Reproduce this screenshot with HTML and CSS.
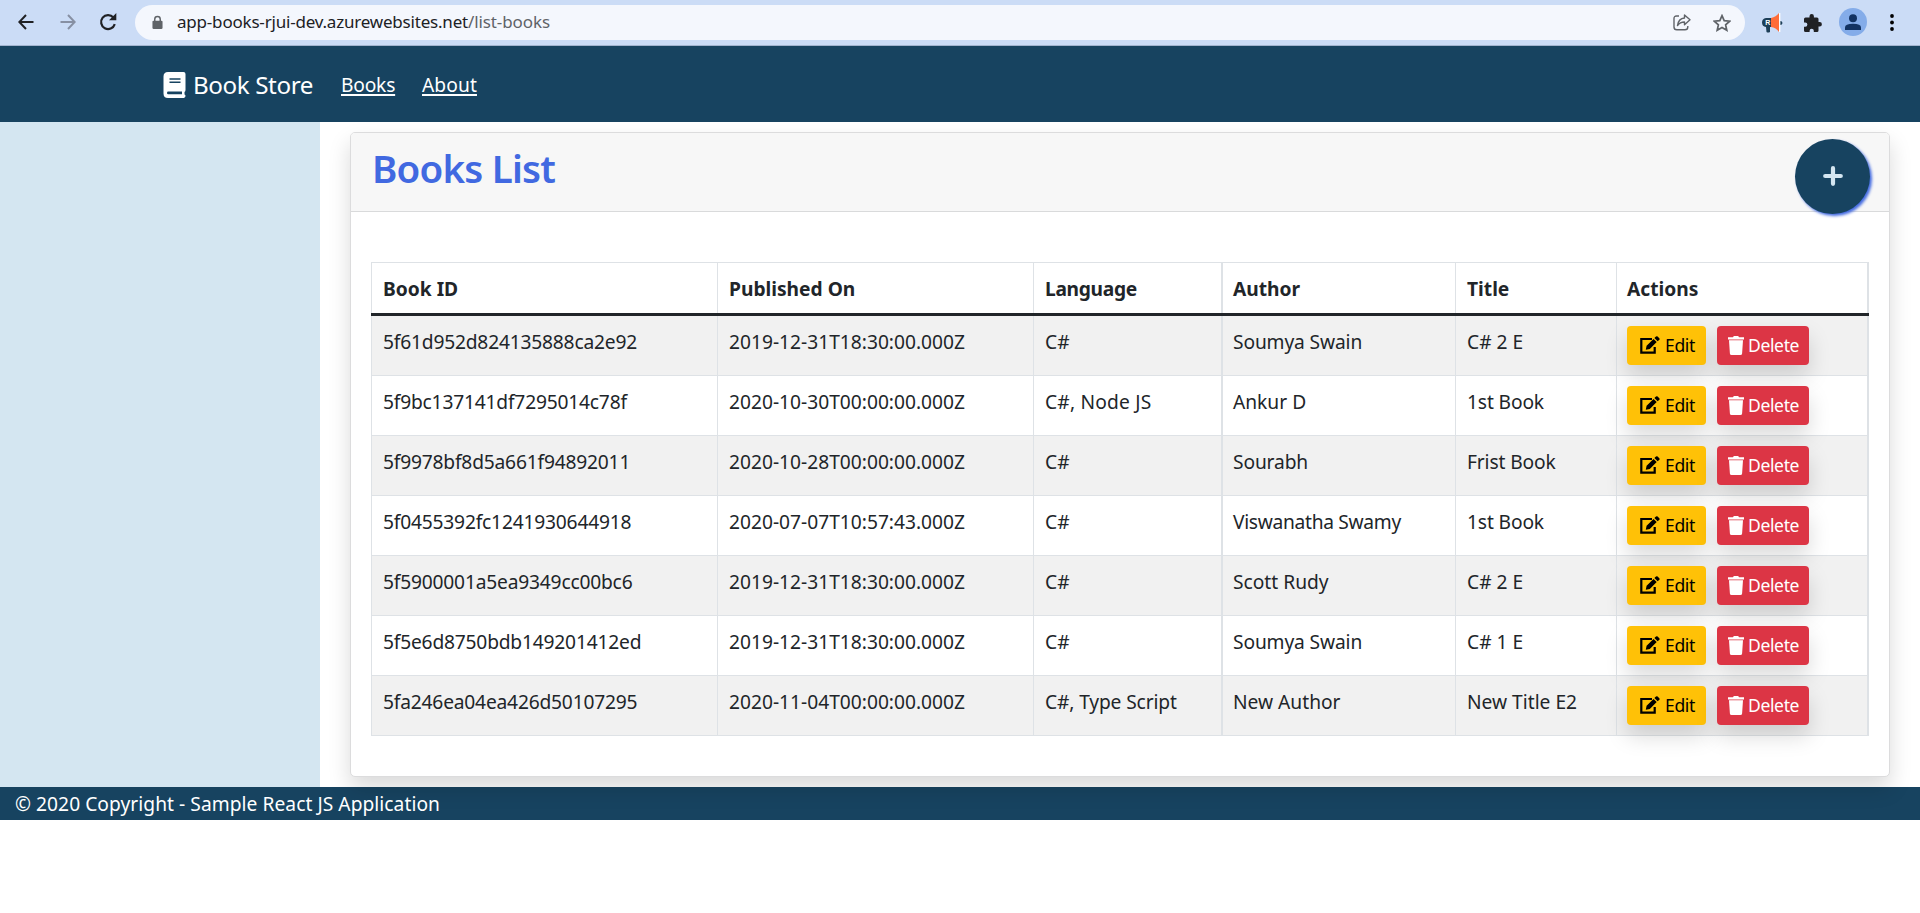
FILE: index.html
```html
<!DOCTYPE html>
<html lang="en">
<head>
<meta charset="utf-8">
<title>Book Store</title>
<link rel="stylesheet" href="styles.css">
</head>
<body>
<svg width="0" height="0" class="defs">
  <symbol id="edit" viewBox="0 0 20 18"><path d="M12 3H1.300V16.700H14.700V11" fill="none" stroke="currentColor" stroke-width="2.200"/><path d="M5.800 13.800l.8-4L13.500 3l3.200 3.100-6.900 6.900zM14.400 2.100L16 .6q.8-.7 1.600 0l1.700 1.600q.8.8 0 1.600l-1.600 1.500z" fill="currentColor"/></symbol>
  <symbol id="trash" viewBox="0 0 16 19"><path d="M0 1.200h5L5.800 0h4.400l.8 1.200h5v2.300H0zM1 4.200h14l-.9 13.200q-.1 1.600-1.700 1.600H3.600q-1.600 0-1.700-1.600z" fill="currentColor"/></symbol>
</svg>
<header class="browser">
  <svg class="back" viewBox="0 0 16 16"><path d="M15.500 8H1.500M8 1L1.300 8 8 15" fill="none" stroke="currentColor" stroke-width="2"/></svg>
  <svg class="forward" viewBox="0 0 16 16"><path d="M.5 8h14M8 1l6.700 7L8 15" fill="none" stroke="currentColor" stroke-width="2"/></svg>
  <svg class="reload" viewBox="0 0 18 18"><path d="M15.800 11.200A7 7 0 1 1 14.400 4.400" fill="none" stroke="currentColor" stroke-width="2.200"/><path d="M17.300 0v7.300H10z" fill="currentColor"/></svg>
  <div class="address">
    <svg class="lock" viewBox="0 0 12 15"><path d="M3 6V4a3 3 0 0 1 6 0v2" fill="none" stroke="currentColor" stroke-width="1.600"/><rect x=".5" y="5.500" width="11" height="9" rx="1.300" fill="currentColor"/></svg>
    <div class="url"><span class="host">app-books-rjui-dev.azurewebsites.net</span><span class="path">/list-books</span></div>
    <svg class="share" viewBox="0 0 18 17"><path d="M6 2H3.500Q1 2 1 4.500V13Q1 15.800 3.800 15.800H12Q14.800 15.800 14.800 13V12M4.500 11.500Q5.500 4.500 11.500 4V1L17 5.800 11.500 10.800V8Q7 8 4.500 11.500z" fill="none" stroke="currentColor" stroke-width="1.400" stroke-linejoin="round"/></svg>
    <svg class="star" viewBox="0 0 18 18"><path d="M9 1.700l2.200 5 5.500.5-4.100 3.600 1.200 5.400L9 13.400l-4.800 2.800 1.200-5.400L1.300 7.200l5.500-.5z" fill="none" stroke="currentColor" stroke-width="1.700"/></svg>
  </div>
  <svg class="horn" viewBox="0 0 21 20"><path d="M4 5h6v9H8v5q-2 1-3.500 0L4 14Q0 13.500 0 9.500T4 5z" fill="#1d3f58"/><text x="3.300" y="12" class="horn-letter">R</text><path d="M18 8q2.500 0 2.500 2T18 12z" fill="#1d3f58"/><path d="M9 5Q14 4 17 0V19Q14 14.500 9 14z" fill="#ff6c37"/><path d="M17.700 0v19" stroke="#fff" stroke-width="1.300"/></svg>
  <svg class="puzzle" viewBox="0 0 18 18"><path d="M1.500 3.500H5.500V2.300a2.200 2.200 0 0 1 4.400 0V3.500H13q1.500 0 1.500 1.500V8h1.200a2.200 2.200 0 0 1 0 4.400H14.500V16.500q0 1.500-1.500 1.500H9.800V16.800a2.100 2.100 0 0 0-4.200 0V18H1.500Q0 18 0 16.500V12.800H1.200a2.200 2.200 0 0 0 0-4.400H0V5Q0 3.500 1.500 3.500z" fill="#202124"/></svg>
  <svg class="avatar" viewBox="0 0 28 28"><circle cx="14" cy="14" r="14" fill="#84ace9"/><circle cx="14" cy="10.200" r="4" fill="#123262"/><path d="M6 22V19.500Q6 15.800 14 15.800T22 19.500V22z" fill="#123262"/></svg>
  <svg class="dots" viewBox="0 0 4 17"><circle cx="2" cy="2" r="1.900"/><circle cx="2" cy="8.500" r="1.900"/><circle cx="2" cy="15" r="1.900"/></svg>
</header>
<nav class="navbar">
  <svg class="book" viewBox="0 0 22 26"><path d="M4.500 0H20q2 0 2 2V18q0 1.400-1 1.900v2.600q1 .3 1 1.500T20.500 26H4.500Q0 26 0 21.500V4.500Q0 0 4.500 0z" fill="#fff"/><path d="M6 7h11M6 10.300h11" stroke="#174360" stroke-width="1.400"/><path d="M4.700 19.500H18.500v2.800H4.700Q3.500 22.300 3.500 20.900T4.700 19.500z" fill="#174360"/></svg>
  <a class="brand">Book Store</a>
  <a class="nav-link nav-books">Books</a>
  <a class="nav-link nav-about">About</a>
</nav>
<div class="layout">
  <aside class="sidebar"></aside>
  <main class="main">
    <section class="card">
      <div class="card-header">
        <h1>Books List</h1>
        <button class="add"><svg viewBox="0 0 20 20"><path d="M10 2.200v15.600M2.200 10h15.600" stroke="#d4e6f1" stroke-width="4.200" stroke-linecap="round"/></svg></button>
      </div>
      <div class="card-body">
        <table class="books">
          <colgroup><col class="c-id"><col class="c-date"><col class="c-lang"><col class="c-author"><col class="c-title"><col class="c-actions"></colgroup>
          <thead><tr><th>Book ID</th><th>Published On</th><th class="tight">Language</th><th>Author</th><th>Title</th><th>Actions</th></tr></thead>
          <tbody>
            <tr><td class="id">5f61d952d824135888ca2e92</td><td>2019-12-31T18:30:00.000Z</td><td>C#</td><td class="snug">Soumya Swain</td><td>C# 2 E</td><td><div class="actions"><button class="edit"><svg><use href="#edit"/></svg><span>Edit</span></button><button class="delete"><svg><use href="#trash"/></svg><span>Delete</span></button></div></td></tr>
            <tr><td class="id">5f9bc137141df7295014c78f</td><td>2020-10-30T00:00:00.000Z</td><td class="wide">C#, Node JS</td><td>Ankur D</td><td class="snug">1st Book</td><td><div class="actions"><button class="edit"><svg><use href="#edit"/></svg><span>Edit</span></button><button class="delete"><svg><use href="#trash"/></svg><span>Delete</span></button></div></td></tr>
            <tr><td class="id">5f9978bf8d5a661f94892011</td><td>2020-10-28T00:00:00.000Z</td><td>C#</td><td class="snug">Sourabh</td><td class="snug">Frist Book</td><td><div class="actions"><button class="edit"><svg><use href="#edit"/></svg><span>Edit</span></button><button class="delete"><svg><use href="#trash"/></svg><span>Delete</span></button></div></td></tr>
            <tr><td class="id">5f0455392fc1241930644918</td><td>2020-07-07T10:57:43.000Z</td><td>C#</td><td class="tight">Viswanatha Swamy</td><td class="snug">1st Book</td><td><div class="actions"><button class="edit"><svg><use href="#edit"/></svg><span>Edit</span></button><button class="delete"><svg><use href="#trash"/></svg><span>Delete</span></button></div></td></tr>
            <tr><td class="id">5f5900001a5ea9349cc00bc6</td><td>2019-12-31T18:30:00.000Z</td><td>C#</td><td>Scott Rudy</td><td>C# 2 E</td><td><div class="actions"><button class="edit"><svg><use href="#edit"/></svg><span>Edit</span></button><button class="delete"><svg><use href="#trash"/></svg><span>Delete</span></button></div></td></tr>
            <tr><td class="id">5f5e6d8750bdb149201412ed</td><td>2019-12-31T18:30:00.000Z</td><td>C#</td><td class="snug">Soumya Swain</td><td>C# 1 E</td><td><div class="actions"><button class="edit"><svg><use href="#edit"/></svg><span>Edit</span></button><button class="delete"><svg><use href="#trash"/></svg><span>Delete</span></button></div></td></tr>
            <tr><td class="id">5fa246ea04ea426d50107295</td><td>2020-11-04T00:00:00.000Z</td><td class="snug">C#, Type Script</td><td>New Author</td><td>New Title E2</td><td><div class="actions"><button class="edit"><svg><use href="#edit"/></svg><span>Edit</span></button><button class="delete"><svg><use href="#trash"/></svg><span>Delete</span></button></div></td></tr>
          </tbody>
        </table>
      </div>
    </section>
  </main>
</div>
<footer class="footer">© 2020 Copyright - Sample React JS Application</footer>
</body>
</html>
```
FILE: styles.css
```css
* { box-sizing: border-box; }
body { margin: 0; background: #fff; color: #212529; font: 19.2px/29px "Noto Sans", "Open Sans", sans-serif; }
svg { display: block; flex: none; }
.defs { position: absolute; }
.browser { display: flex; align-items: center; height: 46px; background: #cbdcf6; border-bottom: 1px solid #a3b4cf; color: #202124; }
.back { width: 16px; height: 16px; margin: 0 0 1px 18px; }
.forward { width: 16px; height: 16px; margin: 0 0 1px 26px; color: #8790a3; }
.reload { width: 18px; height: 18px; margin: 0 0 1px 23px; }
.address { display: flex; align-items: center; width: 1610px; height: 35px; margin-left: 18px; padding: 0 14px 0 17px; border-radius: 18px; background: #f4f7fd; color: #5f6368; }
.lock { width: 11px; height: 15px; }
.url { flex: 1; margin-left: 14px; padding-bottom: 1px; font-size: 17px; line-height: 24px; white-space: nowrap; }
.host { color: #202124; letter-spacing: -.2px; }
.path { letter-spacing: -.1px; }
.share { width: 18px; height: 17px; }
.star { width: 18px; height: 18px; margin-left: 22px; }
.horn { width: 21px; height: 20px; margin-left: 17px; }
.horn-letter { font: bold 7px "Liberation Sans", sans-serif; fill: #fff; }
.puzzle { width: 18px; height: 18px; margin-left: 21px; }
.avatar { width: 28px; height: 28px; margin: 0 0 1px 17px; }
.dots { width: 4px; height: 17px; margin: 0 0 1px 23px; }
.navbar { display: flex; align-items: center; height: 76px; padding-left: 163px; background: #174360; color: #fff; white-space: nowrap; }
.book { width: 23px; height: 26px; margin-top: 1px; }
.brand { width: 148px; margin-left: 7px; font-size: 24.2px; letter-spacing: -.4px; }
.nav-link { text-decoration: underline; text-decoration-thickness: 2px; text-underline-offset: 2px; }
.nav-books { width: 81px; letter-spacing: -.2px; }
.nav-about { letter-spacing: .1px; }
.layout { display: flex; height: 665px; }
.sidebar { width: 320px; background: #d4e6f1; }
.main { flex: 1; padding: 10px 30px; }
.card { height: 645px; border: 1px solid #dcdcdd; border-radius: 5px; background: #fff; box-shadow: 0 11px 22px rgba(0, 0, 0, .15); }
.card-header { display: flex; justify-content: space-between; height: 79px; padding: 6px 19px 0 21px; background: #f7f7f7; border-bottom: 1px solid #d9dadb; border-radius: 4px 4px 0 0; }
h1 { margin: 6px 0 0; color: #4169e1; font-size: 38.500px; font-weight: 600; line-height: 46px; letter-spacing: -.8px; white-space: nowrap; }
.add { display: flex; align-items: center; justify-content: center; width: 75px; height: 75px; padding: 0 0 2px; border: 0; border-radius: 50%; background: #174360; box-shadow: 2px 2px 3px #4169e1; }
.add svg { width: 20px; height: 20px; }
.card-body { padding: 50px 20px 0; }
.books { position: relative; table-layout: fixed; width: 1498px; border-collapse: separate; border-spacing: 0; border: 1px solid #dee2e6; border-right-width: 0; border-bottom: 0; white-space: nowrap; }
/* Unbroken rule under the column headings, drawn over the column borders */
.books::after { content: ""; position: absolute; top: 50px; left: -1px; width: 1498px; height: 3px; background: #212529; }
.c-id { width: 346px; }
.c-date { width: 316px; }
.c-lang { width: 189px; }
.c-author { width: 233px; }
.c-title { width: 161px; }
.c-actions { width: 252px; }
th, td { padding: 0 0 0 11px; text-align: left; vertical-align: top; border-right: 1px solid #dee2e6; }
th:nth-child(3), td:nth-child(3), th:last-child, td:last-child { border-right-width: 2px; }
th:nth-child(4), td:nth-child(4), th:last-child, td:last-child { padding-left: 10px; }
th { height: 53px; padding-top: 11px; font-weight: 700; }
td { height: 60px; padding-top: 11px; border-bottom: 1px solid #dee2e6; }
tbody tr:nth-child(odd) td { background: #f1f1f1; }
td:last-child { padding-top: 10px; }
.id { letter-spacing: -.19px; }
.snug { letter-spacing: -.13px; }
.tight { letter-spacing: -.3px; }
.wide { letter-spacing: .2px; }
.actions { display: flex; gap: 11px; }
.actions button { display: flex; align-items: center; height: 39px; padding: 0 0 1px; border: 0; border-radius: 4px; box-shadow: 0 11px 22px rgba(0, 0, 0, .15); font: 17.5px/24px "Noto Sans", sans-serif; letter-spacing: -.35px; }
.actions .edit { width: 79px; padding-left: 13px; background: #ffc107; color: #000; }
.actions .delete { width: 92px; padding-left: 11px; background: #dc3545; color: #fff; }
.edit svg { width: 20px; height: 18px; margin-right: 5px; }
.delete svg { width: 16px; height: 19px; margin-right: 4px; }
.footer { height: 33px; padding: 2px 0 0 15px; background: #174360; color: #fff; letter-spacing: .05px; }
```
